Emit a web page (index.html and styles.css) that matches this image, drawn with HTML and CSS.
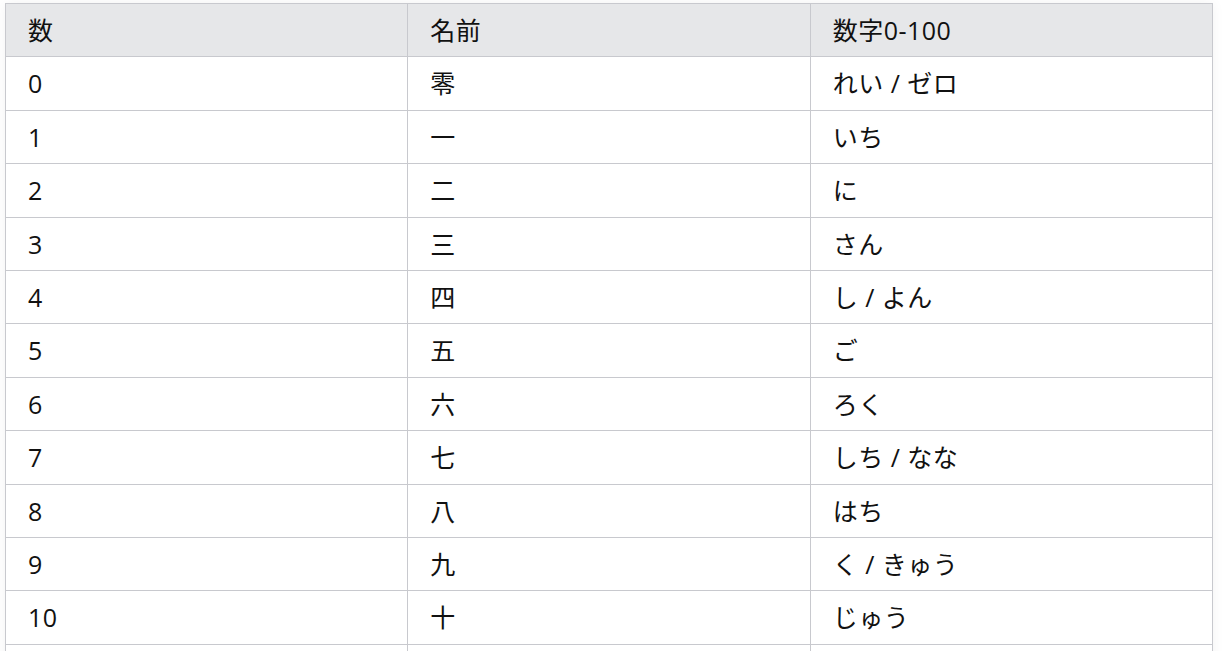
FILE: index.html
```html
<!DOCTYPE html>
<html lang="ja">
<head>
<meta charset="utf-8">
<title>数字0-100</title>
<link rel="stylesheet" href="styles.css">
</head>
<body>
<table class="num-table">
  <thead>
    <tr><th>数</th><th>名前</th><th>数字0-100</th></tr>
  </thead>
  <tbody>
    <tr><td>0</td><td>零</td><td>れい / ゼロ</td></tr>
    <tr><td>1</td><td>一</td><td>いち</td></tr>
    <tr><td>2</td><td>二</td><td>に</td></tr>
    <tr><td>3</td><td>三</td><td>さん</td></tr>
    <tr><td>4</td><td>四</td><td>し / よん</td></tr>
    <tr><td>5</td><td>五</td><td>ご</td></tr>
    <tr><td>6</td><td>六</td><td>ろく</td></tr>
    <tr><td>7</td><td>七</td><td>しち / なな</td></tr>
    <tr><td>8</td><td>八</td><td>はち</td></tr>
    <tr><td>9</td><td>九</td><td>く / きゅう</td></tr>
    <tr><td>10</td><td>十</td><td>じゅう</td></tr>
    <tr class="more"><td>&nbsp;</td><td>&nbsp;</td><td>&nbsp;</td></tr>
  </tbody>
</table>
</body>
</html>
```

FILE: styles.css
```css
html, body {
  margin: 0;
  padding: 0;
  background: #ffffff;
}
body {
  padding: 3px 0 0 5px;
  font-family: "Open Sans", "Noto Sans CJK JP", sans-serif;
  color: #111111;
}
.num-table {
  width: 1208px;
  border-collapse: collapse;
  table-layout: fixed;
  font-size: 25px;
  box-shadow: 0 0 12px rgba(0, 0, 0, 0.05);
}
.num-table th,
.num-table td {
  border: 1px solid #c8c9ce;
  padding: 11px 22px;
  line-height: 30.4px;
  text-align: left;
  font-weight: normal;
  white-space: nowrap;
  letter-spacing: 0.5px;
}
.num-table th {
  background: #e6e7e9;
}
```
